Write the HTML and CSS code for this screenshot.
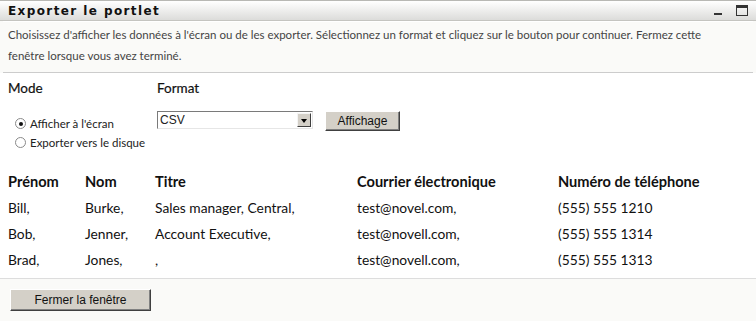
FILE: index.html
```html
<!DOCTYPE html>
<html lang="fr">
  <head>
    <meta charset="UTF-8" />
    <title>Exporter le portlet</title>
    <link rel="stylesheet" href="styles.css">
  </head>
  <body>
    <div class="portlet">
      <div class="titlebar">
        <span class="title">Exporter le portlet</span>
        <span class="controls">
          <svg class="icon" width="11" height="11" viewBox="0 0 11 11"><rect x="1" y="8" width="8" height="2" fill="#333"/></svg>
          <svg class="icon" width="12" height="11" viewBox="0 0 12 11"><rect x="0.5" y="0.5" width="11" height="10" fill="none" stroke="#333"/><rect x="0" y="0" width="12" height="3" fill="#333"/></svg>
        </span>
      </div>

      <div class="intro">
        Choisissez d'afficher les données à l'écran ou de les exporter. Sélectionnez un format et cliquez sur le bouton pour continuer. Fermez cette fenêtre lorsque vous avez terminé.
      </div>

      <div class="options">
        <div class="mode">
          <div class="label">Mode</div>
          <div class="radios">
            <div class="radio"><span class="dot checked"></span>Afficher à l'écran</div>
            <div class="radio"><span class="dot"></span>Exporter vers le disque</div>
          </div>
        </div>
        <div class="format">
          <div class="label">Format</div>
          <div class="format-row">
            <div class="select"><span class="value">CSV</span><span class="arrow"></span></div>
            <div class="btn">Affichage</div>
          </div>
        </div>
      </div>

      <div class="data">
        <div class="th">Prénom</div>
        <div class="th">Nom</div>
        <div class="th">Titre</div>
        <div class="th">Courrier électronique</div>
        <div class="th">Numéro de téléphone</div>

        <div>Bill,</div>
        <div>Burke,</div>
        <div>Sales manager, Central,</div>
        <div>test@novel.com,</div>
        <div>(555) 555 1210</div>

        <div>Bob,</div>
        <div>Jenner,</div>
        <div>Account Executive,</div>
        <div>test@novell.com,</div>
        <div>(555) 555 1314</div>

        <div>Brad,</div>
        <div>Jones,</div>
        <div>,</div>
        <div>test@novell.com,</div>
        <div>(555) 555 1313</div>
      </div>

      <div class="footer">
        <div class="btn close">Fermer la fenêtre</div>
      </div>
    </div>
  </body>
</html>
```

FILE: styles.css
```css
body {
  margin: 0;
  background: #ffffff;
  font-family: Lato, "Liberation Sans", sans-serif;
  color: #222;
}

.portlet {
  width: 756px;
  height: 321px;
  display: flex;
  flex-direction: column;
  background: #fafaf8;
}

.titlebar {
  height: 20px;
  border-top: 1px solid #b8b8b4;
  border-bottom: 1px solid #c4c4c0;
  background: linear-gradient(#ffffff, #dcdcda);
  display: flex;
  align-items: center;
  justify-content: space-between;
  padding: 0 8px;
}

.title {
  font-family: "DejaVu Sans", sans-serif;
  font-weight: bold;
  font-size: 12px;
  letter-spacing: 1.4px;
  color: #111;
}

.controls {
  display: flex;
  gap: 12px;
  align-items: center;
}

.icon {
  display: block;
}

.intro {
  margin: 0 3px;
  padding: 2px 30px 6px 5px;
  font-size: 11.5px;
  line-height: 21px;
  color: #444;
  border-bottom: 1px solid #cccccc;
  border-top: 1px solid #ffffff;
}

.options {
  background: #ffffff;
  display: flex;
  padding: 6px 8px 16px;
  font-size: 11.5px;
}

.label {
  font-size: 13.5px;
  color: #111;
  line-height: 18px;
  height: 30px;
  -webkit-text-stroke: 0.2px #111;
}

.mode {
  width: 149px;
}

.radios {
  padding-top: 5px;
}

.radio {
  display: flex;
  align-items: center;
  height: 19px;
  padding-left: 7px;
  color: #222;
}

.dot {
  width: 9px;
  height: 9px;
  border: 1px solid #8a8a8a;
  border-radius: 50%;
  margin-right: 4px;
  position: relative;
  background: #fff;
}

.dot.checked::after {
  content: "";
  position: absolute;
  left: 2.5px;
  top: 2.5px;
  width: 4px;
  height: 4px;
  border-radius: 50%;
  background: #111;
}

.format-row {
  display: flex;
  align-items: flex-start;
  gap: 12px;
  margin-top: 2px;
}

.select {
  width: 152px;
  height: 16px;
  border: 1px solid;
  border-color: #7a7a7a #e6e6e6 #e6e6e6 #7a7a7a;
  background: #fff;
  display: flex;
  align-items: center;
  justify-content: space-between;
  font-family: "Liberation Sans", sans-serif;
  font-size: 12px;
  padding-left: 2px;
}

.arrow {
  width: 14px;
  height: 14px;
  margin-right: 1px;
  background: #d4d0c8;
  border: 1px solid;
  border-color: #f4f4f4 #404040 #404040 #f4f4f4;
  box-sizing: border-box;
  position: relative;
}

.arrow::after {
  content: "";
  position: absolute;
  left: 3px;
  top: 5px;
  border-left: 3.5px solid transparent;
  border-right: 3.5px solid transparent;
  border-top: 4px solid #000;
}

.btn {
  background: #d4d0c8;
  border: 1px solid;
  border-color: #ffffff #404040 #404040 #ffffff;
  box-shadow: inset -1px -1px 0 #808080;
  font-family: "Liberation Sans", sans-serif;
  font-size: 12px;
  color: #111;
  height: 18px;
  line-height: 18px;
  width: 73px;
  text-align: center;
}

.data {
  background: #ffffff;
  display: grid;
  grid-template-columns: 77px 70px 202px 201px 1fr;
  grid-auto-rows: 26px;
  align-items: center;
  padding: 0 8px 6px;
  font-size: 13.8px;
  color: #111;
  border-bottom: 1px solid #dddddd;
}

.th {
  font-weight: bold;
  font-size: 14.6px;
  height: 26px;
  display: flex;
  align-items: center;
}

.footer {
  flex: 1;
  padding: 10px 10px;
}

.btn.close {
  width: 139px;
  height: 20px;
  line-height: 20px;
}
```
